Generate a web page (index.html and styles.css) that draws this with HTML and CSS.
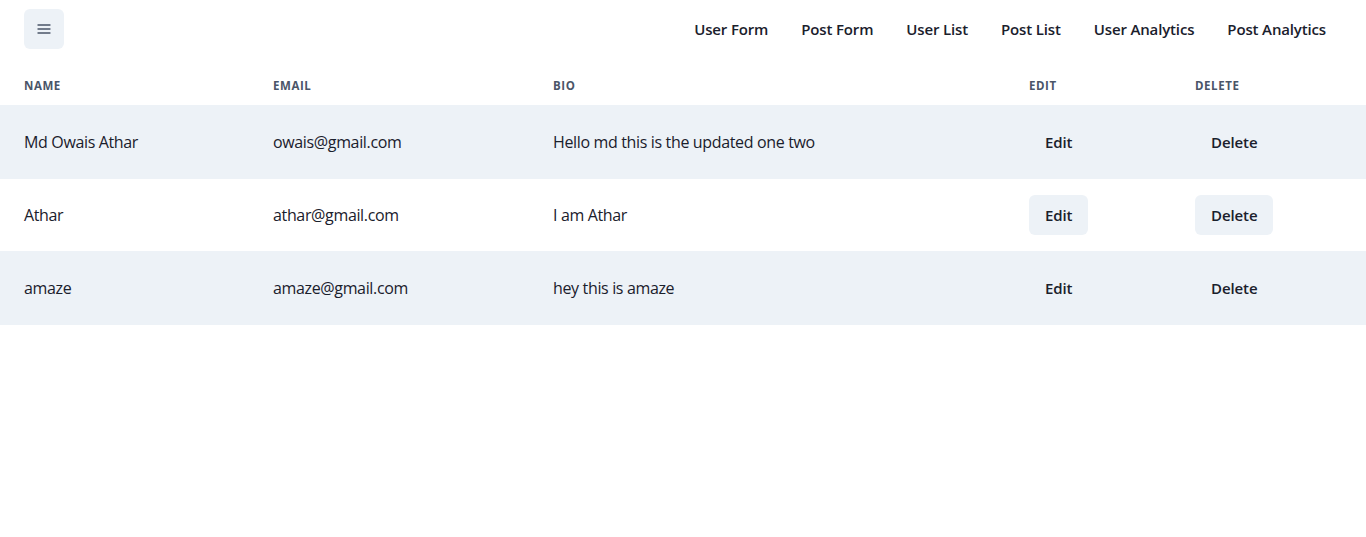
FILE: index.html
```html
<!DOCTYPE html>
<html lang="en">
<head>
<meta charset="utf-8">
<title>User List</title>
<link rel="stylesheet" href="styles.css">
</head>
<body>
<header class="topbar">
  <button class="menu-btn" aria-label="Open menu">
    <svg viewBox="0 0 24 24" width="16" height="16" aria-hidden="true">
      <path fill="currentColor" d="M3 5a1 1 0 1 0 0 2h18a1 1 0 1 0 0-2H3zm0 6a1 1 0 1 0 0 2h18a1 1 0 1 0 0-2H3zm0 6a1 1 0 1 0 0 2h18a1 1 0 1 0 0-2H3z"/>
    </svg>
  </button>
  <nav class="nav">
    <a href="#">User Form</a>
    <a href="#">Post Form</a>
    <a href="#">User List</a>
    <a href="#">Post List</a>
    <a href="#">User Analytics</a>
    <a href="#">Post Analytics</a>
  </nav>
</header>
<table class="users">
  <thead>
    <tr>
      <th class="c-name">Name</th>
      <th class="c-email">Email</th>
      <th class="c-bio">Bio</th>
      <th class="c-edit">Edit</th>
      <th class="c-del">Delete</th>
    </tr>
  </thead>
  <tbody>
    <tr>
      <td>Md Owais Athar</td>
      <td>owais@gmail.com</td>
      <td>Hello md this is the updated one two</td>
      <td><button class="btn">Edit</button></td>
      <td><button class="btn">Delete</button></td>
    </tr>
    <tr>
      <td>Athar</td>
      <td>athar@gmail.com</td>
      <td>I am Athar</td>
      <td><button class="btn">Edit</button></td>
      <td><button class="btn">Delete</button></td>
    </tr>
    <tr>
      <td>amaze</td>
      <td>amaze@gmail.com</td>
      <td>hey this is amaze</td>
      <td><button class="btn">Edit</button></td>
      <td><button class="btn">Delete</button></td>
    </tr>
  </tbody>
</table>
</body>
</html>
```
FILE: styles.css
```css
* { box-sizing: border-box; }
html, body {
  margin: 0;
  padding: 0;
  background: #ffffff;
  color: #1A202C;
  font-family: "Open Sans", "Noto Sans", sans-serif;
  font-size: 16px;
  line-height: 1.5;
}
.topbar {
  display: flex;
  align-items: center;
  justify-content: space-between;
  height: 64px;
  padding: 0 40px 6px 24px;
}
.menu-btn {
  width: 40px;
  height: 40px;
  border: none;
  border-radius: 6px;
  background: #EDF2F7;
  color: #4A5568;
  display: flex;
  align-items: center;
  justify-content: center;
  padding: 0;
  cursor: pointer;
}
.nav {
  display: flex;
  gap: 33px;
}
.nav a {
  color: #1A202C;
  text-decoration: none;
  font-weight: 600;
  font-size: 15px;
  letter-spacing: -0.15px;
  line-height: 24px;
}
.users {
  width: 100%;
  border-collapse: collapse;
}
.users th {
  text-align: left;
  font-size: 11.5px;
  font-weight: 700;
  text-transform: uppercase;
  letter-spacing: 0.05em;
  color: #4A5568;
  line-height: 16px;
  padding: 14px 24px 11px;
  border-bottom: 1px solid #EDF2F7;
}
.c-name { width: 249px; }
.c-email { width: 280px; }
.c-bio { width: 476px; }
.c-edit { width: 166px; }
.c-del { width: 195px; }
.users td {
  padding: 16px 24px;
  line-height: 20px;
  height: 73px;
  letter-spacing: -0.35px;
  border-bottom: 1px solid #EDF2F7;
  vertical-align: middle;
}
.users tbody tr:nth-child(odd) td {
  background: #EDF2F7;
}
.btn {
  font-family: inherit;
  font-size: 15px;
  font-weight: 600;
  letter-spacing: -0.1px;
  color: #1A202C;
  background: #EDF2F7;
  border: none;
  border-radius: 6px;
  height: 40px;
  padding: 0 16px;
  cursor: pointer;
}
```
